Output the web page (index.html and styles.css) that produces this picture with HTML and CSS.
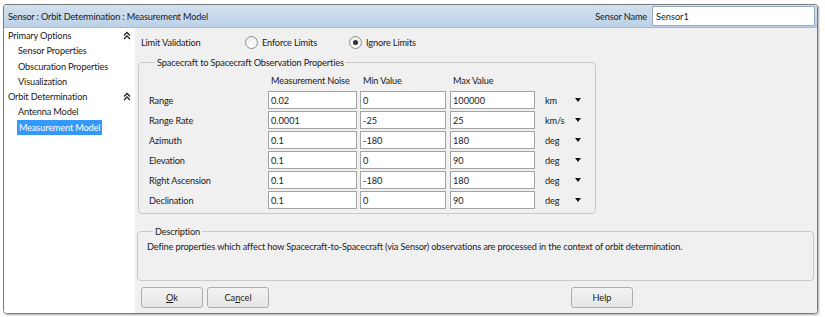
FILE: index.html
```html
<html><head>
  <meta charset="UTF-8">
  <title>Sensor : Orbit Determination : Measurement Model</title>
  <link rel="stylesheet" href="styles.css">
</head>
<body>
  <div class="window">
    <div class="titlebar">
      <div class="title">Sensor : Orbit Determination : Measurement Model</div>
      <label class="name-label">Sensor Name</label>
      <input class="name-input" type="text" value="Sensor1">
    </div>
    <div class="body">
      <div class="sidebar">
        <div class="section">
          <span>Primary Options</span>
          <svg class="collapse" width="8" height="9" viewBox="0 0 8 9"><path d="M1 4.5L4 1.5L7 4.5M1 8L4 5L7 8" fill="none" stroke="#222" stroke-width="1.3"/></svg>
        </div>
        <div class="item">Sensor Properties</div>
        <div class="item">Obscuration Properties</div>
        <div class="item">Visualization</div>
        <div class="section">
          <span>Orbit Determination</span>
          <svg class="collapse" width="8" height="9" viewBox="0 0 8 9"><path d="M1 4.5L4 1.5L7 4.5M1 8L4 5L7 8" fill="none" stroke="#222" stroke-width="1.3"/></svg>
        </div>
        <div class="item">Antenna Model</div>
        <div class="item"><span class="selected">Measurement Model</span></div>
      </div>

      <div class="main">
        <div class="limits">
          <span class="limits-label">Limit Validation</span>
          <label class="radio"><span class="dot"></span>Enforce Limits</label>
          <label class="radio"><span class="dot checked"></span>Ignore Limits</label>
        </div>

        <fieldset class="group obs">
          <legend>Spacecraft to Spacecraft Observation Properties</legend>
          <div class="grid" id="grid">
            <span></span>
            <span class="head">Measurement Noise</span>
            <span class="head">Min Value</span>
            <span class="head">Max Value</span>
            <span></span>
            <span></span>
          </div>
        </fieldset>

        <fieldset class="group desc">
          <legend>Description</legend>
          <div class="desc-text">Define properties which affect how Spacecraft-to-Spacecraft (via Sensor) observations are processed in the context of orbit determination.</div>
        </fieldset>

        <div class="buttons">
          <button class="btn"><u>O</u>k</button>
          <button class="btn">Ca<u>n</u>cel</button>
          <button class="btn help">Help</button>
        </div>
      </div>
    </div>
  </div>

  <script>
    const rows = [
      ['Range', '0.02', '0', '100000', 'km'],
      ['Range Rate', '0.0001', '-25', '25', 'km/s'],
      ['Azimuth', '0.1', '-180', '180', 'deg'],
      ['Elevation', '0.1', '0', '90', 'deg'],
      ['Right Ascension', '0.1', '-180', '180', 'deg'],
      ['Declination', '0.1', '0', '90', 'deg']
    ];
    const grid = document.getElementById('grid');
    rows.forEach(r => {
      grid.insertAdjacentHTML('beforeend',
        `<span class="row-label">${r[0]}</span>` +
        `<input class="field noise" value="${r[1]}">` +
        `<input class="field min" value="${r[2]}">` +
        `<input class="field max" value="${r[3]}">` +
        `<span class="unit">${r[4]}</span>` +
        `<span class="arrow"></span>`);
    });
  </script>
</body>
</html>
```

FILE: styles.css
```css
body {
  margin: 0;
  background-color: #ffffff;
  font-family: 'Lato', 'Liberation Sans', sans-serif;
  font-size: 9.2px;
  letter-spacing: -0.15px;
  color: #1a1a1a;
}
.window {
  margin: 4px 7px 0 3px;
  height: 308px;
  border: 1px solid #7c7c7c;
  border-radius: 3px 3px 4px 4px;
  box-shadow: 1px 1px 2px rgba(0,0,0,0.35);
  display: flex;
  flex-direction: column;
  overflow: hidden;
}
.titlebar {
  height: 22px;
  display: flex;
  align-items: center;
  padding: 0 2px 0 4px;
  background: linear-gradient(#d3e1f0, #bcd1e7);
  border-bottom: 1px solid #a3b9d1;
}
.title {
  flex: 1;
}
.name-label {
  margin-right: 5px;
}
.name-input {
  width: 163px;
  height: 20px;
  box-sizing: border-box;
  border: 1px solid #93aac4;
  padding: 0 3px;
  font: inherit;
  color: #1a1a1a;
  background: #fff;
}
.body {
  flex: 1;
  display: flex;
}
.sidebar {
  width: 131px;
  background: #fff;
}
.section {
  display: flex;
  align-items: center;
  justify-content: space-between;
  height: 15.3px;
  padding: 0 4px;
}
.item {
  height: 15.3px;
  line-height: 15.3px;
  padding-left: 14px;
}
.selected {
  background: #3399ff;
  color: #fff;
  padding: 2px;
  margin-left: -1px;
}
.main {
  flex: 1;
  background: #f0f0f0;
  padding: 4px 3px 0 2px;
  display: flex;
  flex-direction: column;
}
.limits {
  display: flex;
  align-items: center;
  height: 20px;
  padding-left: 4px;
}
.limits-label {
  width: 104px;
}
.radio {
  display: flex;
  align-items: center;
  width: 104px;
}
.dot {
  width: 11px;
  height: 11px;
  border: 1px solid #8c8c8c;
  border-radius: 50%;
  background: linear-gradient(#ececec, #fff);
  margin-right: 4px;
  position: relative;
}
.dot.checked:after {
  content: "";
  position: absolute;
  left: 3px;
  top: 3px;
  width: 5px;
  height: 5px;
  border-radius: 50%;
  background: #333;
}
.group {
  border: 1px solid #c9c9c9;
  border-radius: 4px;
  margin: 0;
  padding: 0;
}
.group legend {
  padding: 0 2px;
  margin-left: 6px;
}
.obs {
  width: 458px;
  box-sizing: border-box;
  margin-top: 5px;
  margin-left: 1px;
  padding: 2px 0 3px 10px;
}
.grid {
  display: grid;
  grid-template-columns: 119px 92px 90px 95px 30px 10px;
  grid-auto-rows: 20px;
  align-items: center;
}
.head {
  padding-left: 3px;
}
.field {
  height: 18px;
  box-sizing: border-box;
  border: 1px solid #a3a3a3;
  background: #fff;
  padding: 0 2px;
  font: inherit;
  color: #1a1a1a;
}
.noise { width: 89px; }
.min { width: 86px; }
.max { width: 85px; }
.arrow {
  width: 0;
  height: 0;
  border-left: 3px solid transparent;
  border-right: 3px solid transparent;
  border-top: 4px solid #111;
}
.desc {
  margin-top: 12px;
  height: 55px;
  box-sizing: border-box;
  padding: 4px 9px 0 9px;
}
.buttons {
  display: flex;
  margin-top: 6px;
  padding-left: 4px;
  gap: 4px;
}
.btn {
  width: 62px;
  height: 21px;
  border: 1px solid #acacac;
  border-radius: 3px;
  background: linear-gradient(#f3f3f3, #e6e6e6);
  font: inherit;
  color: #1a1a1a;
}
.btn.help {
  margin-left: 298px;
}
```
